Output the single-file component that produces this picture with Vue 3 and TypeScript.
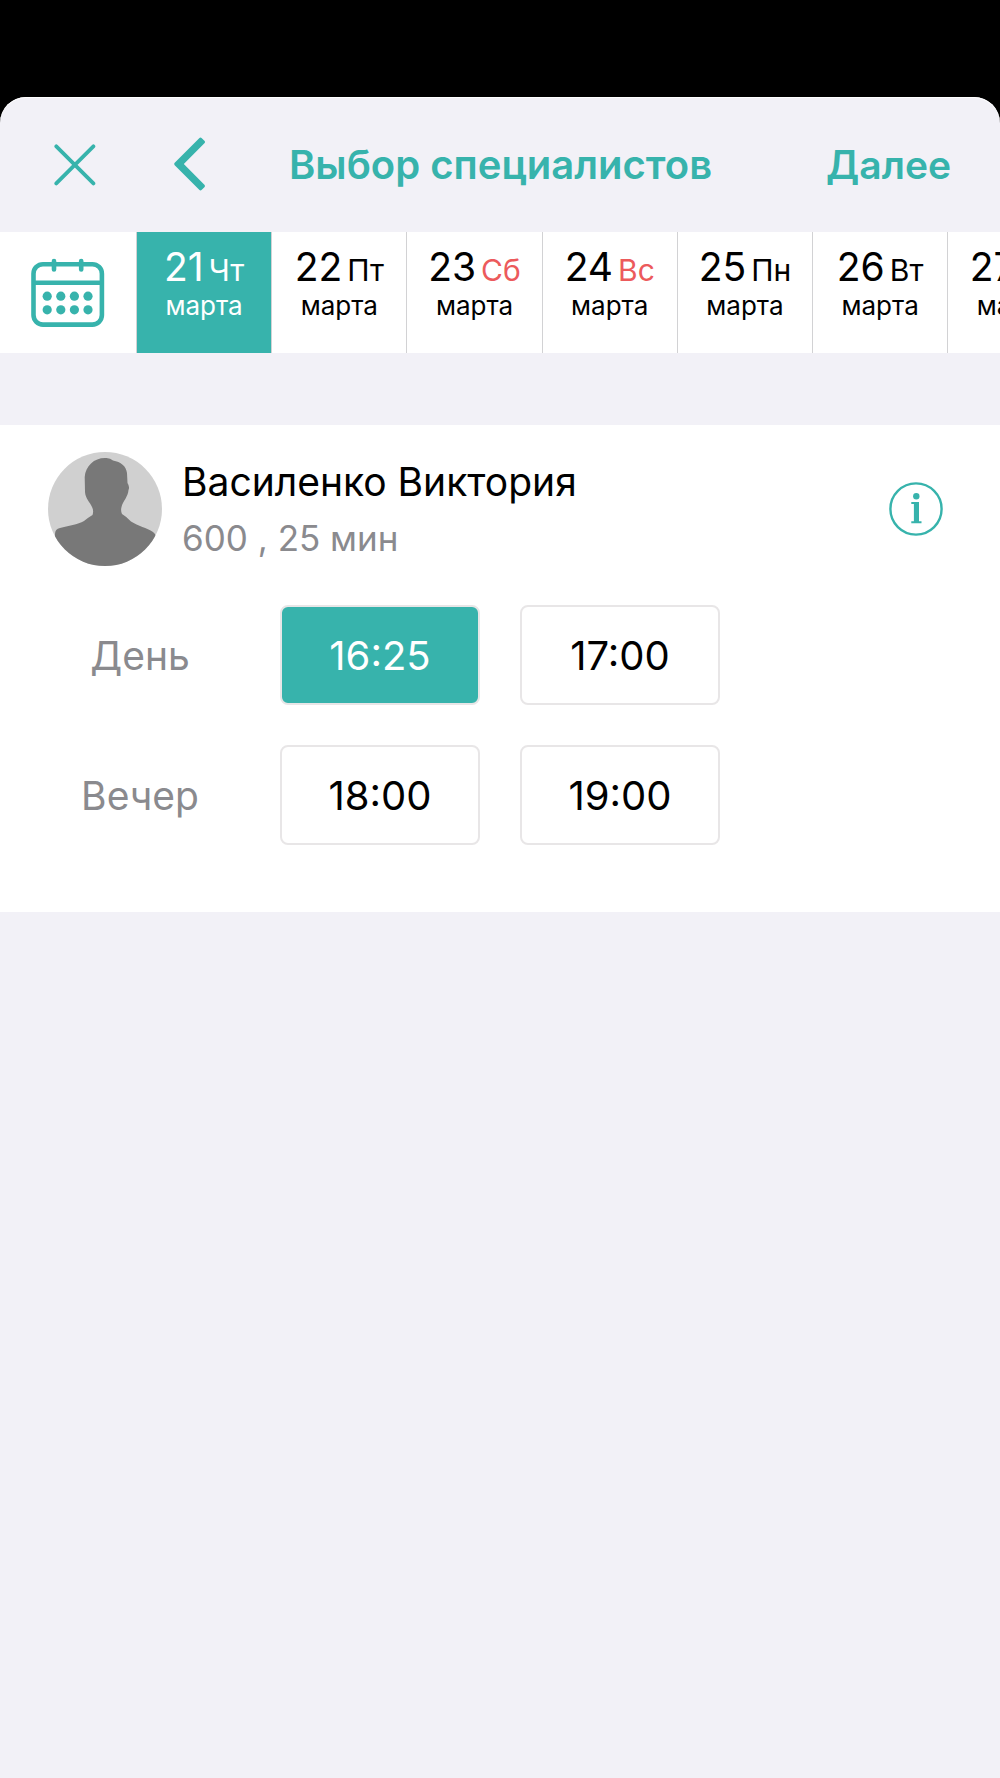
<script setup lang="ts">
import { ref } from 'vue'

interface Day {
  num: number
  weekday: string
  month: string
  weekend?: boolean
}

interface Period {
  label: string
  slots: string[]
}

const days: Day[] = [
  { num: 21, weekday: 'Чт', month: 'марта' },
  { num: 22, weekday: 'Пт', month: 'марта' },
  { num: 23, weekday: 'Сб', month: 'марта', weekend: true },
  { num: 24, weekday: 'Вс', month: 'марта', weekend: true },
  { num: 25, weekday: 'Пн', month: 'марта' },
  { num: 26, weekday: 'Вт', month: 'марта' },
  { num: 27, weekday: 'Ср', month: 'марта' },
]

const periods: Period[] = [
  { label: 'День', slots: ['16:25', '17:00'] },
  { label: 'Вечер', slots: ['18:00', '19:00'] },
]

const selectedDay = ref<number>(21)
const selectedSlot = ref<string>('16:25')
</script>

<template>
  <div class="screen">
    <main class="sheet">
      <header class="bar">
        <div class="bar-left">
          <button class="icon-btn" type="button" aria-label="Закрыть">
            <svg width="42" height="42" viewBox="0 0 42 42" fill="none" stroke="currentColor" stroke-width="3.8" stroke-linecap="round">
              <path d="M2.3 2.3 39.4 39.4M39.4 2.3 2.3 39.4" />
            </svg>
          </button>
          <button class="icon-btn" type="button" aria-label="Назад">
            <svg width="32" height="56" viewBox="0 0 32 56" fill="currentColor">
              <path d="M25.2 1.2Q26.5 0 27.8 1.2L30.4 3.8Q31.6 5 30.4 6.3L9.8 27 30.4 47.7Q31.6 49 30.4 50.2L27.8 52.8Q26.5 54 25.2 52.8L.7 28.2Q-.3 27 .7 25.8Z" />
            </svg>
          </button>
        </div>
        <h1 class="title">Выбор специалистов</h1>
        <button class="next" type="button">Далее</button>
      </header>

      <nav class="strip" aria-label="Дата">
        <button class="calendar" type="button" aria-label="Календарь">
          <svg width="74" height="72" viewBox="0 0 74 72" fill="none" stroke="currentColor" stroke-width="4.6">
            <rect x="2.5" y="7.2" width="68.4" height="60.4" rx="9.5" />
            <path d="M2.5 25.8H71" />
            <path d="M23 4V12.4M50.2 4V12.4" stroke-linecap="round" />
            <g fill="currentColor" stroke="none">
              <circle v-for="n in 8" :key="n" :cx="16.2 + ((n - 1) % 4) * 13.6" :cy="n > 4 ? 52.8 : 39.2" r="4.6" />
            </g>
          </svg>
        </button>
        <div class="days">
          <button
            v-for="d in days"
            :key="d.num"
            type="button"
            class="day"
            :class="{ active: d.num === selectedDay }"
            @click="selectedDay = d.num"
          >
            <span class="date">
              <span class="num">{{ d.num }}</span>
              <span class="weekday" :class="{ weekend: d.weekend }">{{ d.weekday }}</span>
            </span>
            <span class="month">{{ d.month }}</span>
          </button>
        </div>
      </nav>

      <section class="card">
        <div class="person">
          <svg class="avatar" viewBox="0 0 114 114" aria-hidden="true">
            <defs>
              <clipPath id="face"><circle cx="57" cy="57" r="57" /></clipPath>
            </defs>
            <g clip-path="url(#face)">
              <rect width="114" height="114" fill="#d0d0d0" />
              <path
                fill="#787878"
                d="M7 114V82Q7 77 12 76C20 74 30 72.500 36 69Q41 65 44.500 63Q46 59 44 55C42 50 37.500 47 37 40L36.700 25C37.500 14 46 6 57 6Q62 5.500 65 8.500C73 10 78 14 79 21L79.500 31Q82 35 80.500 38C80 45 75 49 73.500 55Q72.500 59 74 62Q79 65 83 69.500C90 74 99 76 105 80Q109 83 107 86V114Z"
              />
            </g>
          </svg>
          <div class="who">
            <h2 class="name">Василенко Виктория</h2>
            <p class="meta">600 , 25 мин</p>
          </div>
          <button class="icon-btn" type="button" aria-label="Информация">
            <svg width="54" height="54" viewBox="0 0 54 54">
              <circle cx="27" cy="27" r="25.6" fill="none" stroke="currentColor" stroke-width="2.4" />
              <g fill="currentColor">
                <circle cx="27.3" cy="14.2" r="3.2" />
                <path d="M22.3 20H30V39.2H32.5V41.3H22.3V39.2H24.9V22.1H22.3Z" />
              </g>
            </svg>
          </button>
        </div>

        <div v-for="p in periods" :key="p.label" class="period" role="group" :aria-label="p.label">
          <span class="label">{{ p.label }}</span>
          <button
            v-for="s in p.slots"
            :key="s"
            type="button"
            class="slot"
            :class="{ chosen: s === selectedSlot }"
            @click="selectedSlot = s"
          >{{ s }}</button>
        </div>
      </section>
    </main>
  </div>
</template>

<style>
body {
  margin: 0;
  background: #000;
}
</style>

<style scoped>
.screen {
  display: flex;
  flex-direction: column;
  min-height: 100vh;
  box-sizing: border-box;
  padding-top: 97px;
  overflow: hidden;
  background: #000;
  color: #000;
  font-family: Inter, Roboto, sans-serif;
}

button {
  margin: 0;
  padding: 0;
  border: 0;
  background: none;
  color: inherit;
  font: inherit;
  cursor: pointer;
}

svg {
  display: block;
}

.sheet {
  flex: 1;
  border-radius: 26px 26px 0 0;
  background: #f2f1f7;
  box-shadow: inset 0 1px 0 #fff;
}

.bar {
  display: grid;
  grid-template-columns: 1fr auto 1fr;
  align-items: center;
  height: 135px;
  padding: 0 49px 0 54px;
  color: #37b3ac;
  font-size: 40px;
  line-height: 48px;
}

.bar-left {
  display: flex;
  align-items: center;
  gap: 78px;
}

.icon-btn {
  color: #37b3ac;
}

.title {
  margin: 0 4px 0 0;
  font-size: 40px;
  font-weight: 600;
  white-space: nowrap;
}

.next {
  justify-self: end;
  font-size: 39px;
  font-weight: 600;
}

.strip {
  display: flex;
  height: 121px;
  background: #fff;
}

.calendar {
  display: flex;
  align-items: center;
  justify-content: center;
  flex: 0 0 136px;
  color: #37b3ac;
}

.days {
  display: flex;
  flex: 1;
  min-width: 0;
  overflow: hidden;
}

.day {
  display: flex;
  flex-direction: column;
  align-items: center;
  box-sizing: border-box;
  flex: 0 0 15.65%;
  padding-top: 11px;
  border-left: 1px solid #d2d2d4;
}

.day.active {
  background: #37b3ac;
  color: #fff;
}

.date {
  display: flex;
  align-items: baseline;
  gap: 5px;
  font-size: 39px;
  line-height: 48px;
}

.weekday {
  font-size: 30px;
  font-weight: 400;
}

.weekend {
  color: #ec5a5c;
}

.month {
  font-size: 26px;
  line-height: 24px;
}

.card {
  margin-top: 72px;
  padding: 27px 57px 67px 48px;
  background: #fff;
}

.person {
  display: flex;
  align-items: center;
  margin-bottom: 39px;
}

.avatar {
  flex: none;
  width: 114px;
  height: 114px;
}

.who {
  flex: 1;
  padding-left: 20px;
}

.name {
  margin: 0;
  font-size: 39px;
  font-weight: 400;
  line-height: 58px;
}

.meta {
  margin: 0;
  color: #8a8a8e;
  font-size: 35px;
  line-height: 54px;
}

.period {
  display: flex;
  align-items: center;
  gap: 40px;
  font-size: 40px;
}

.period + .period {
  margin-top: 40px;
}

.label {
  width: 184px;
  margin-right: 8px;
  box-sizing: border-box;
  color: #8a8a8e;
  font-size: 39px;
  text-align: center;
}

.slot {
  box-sizing: border-box;
  width: 200px;
  height: 100px;
  border: 2px solid #e8e6e7;
  border-radius: 8px;
}

.slot.chosen {
  background: #37b3ac;
  color: #fff;
}
</style>
